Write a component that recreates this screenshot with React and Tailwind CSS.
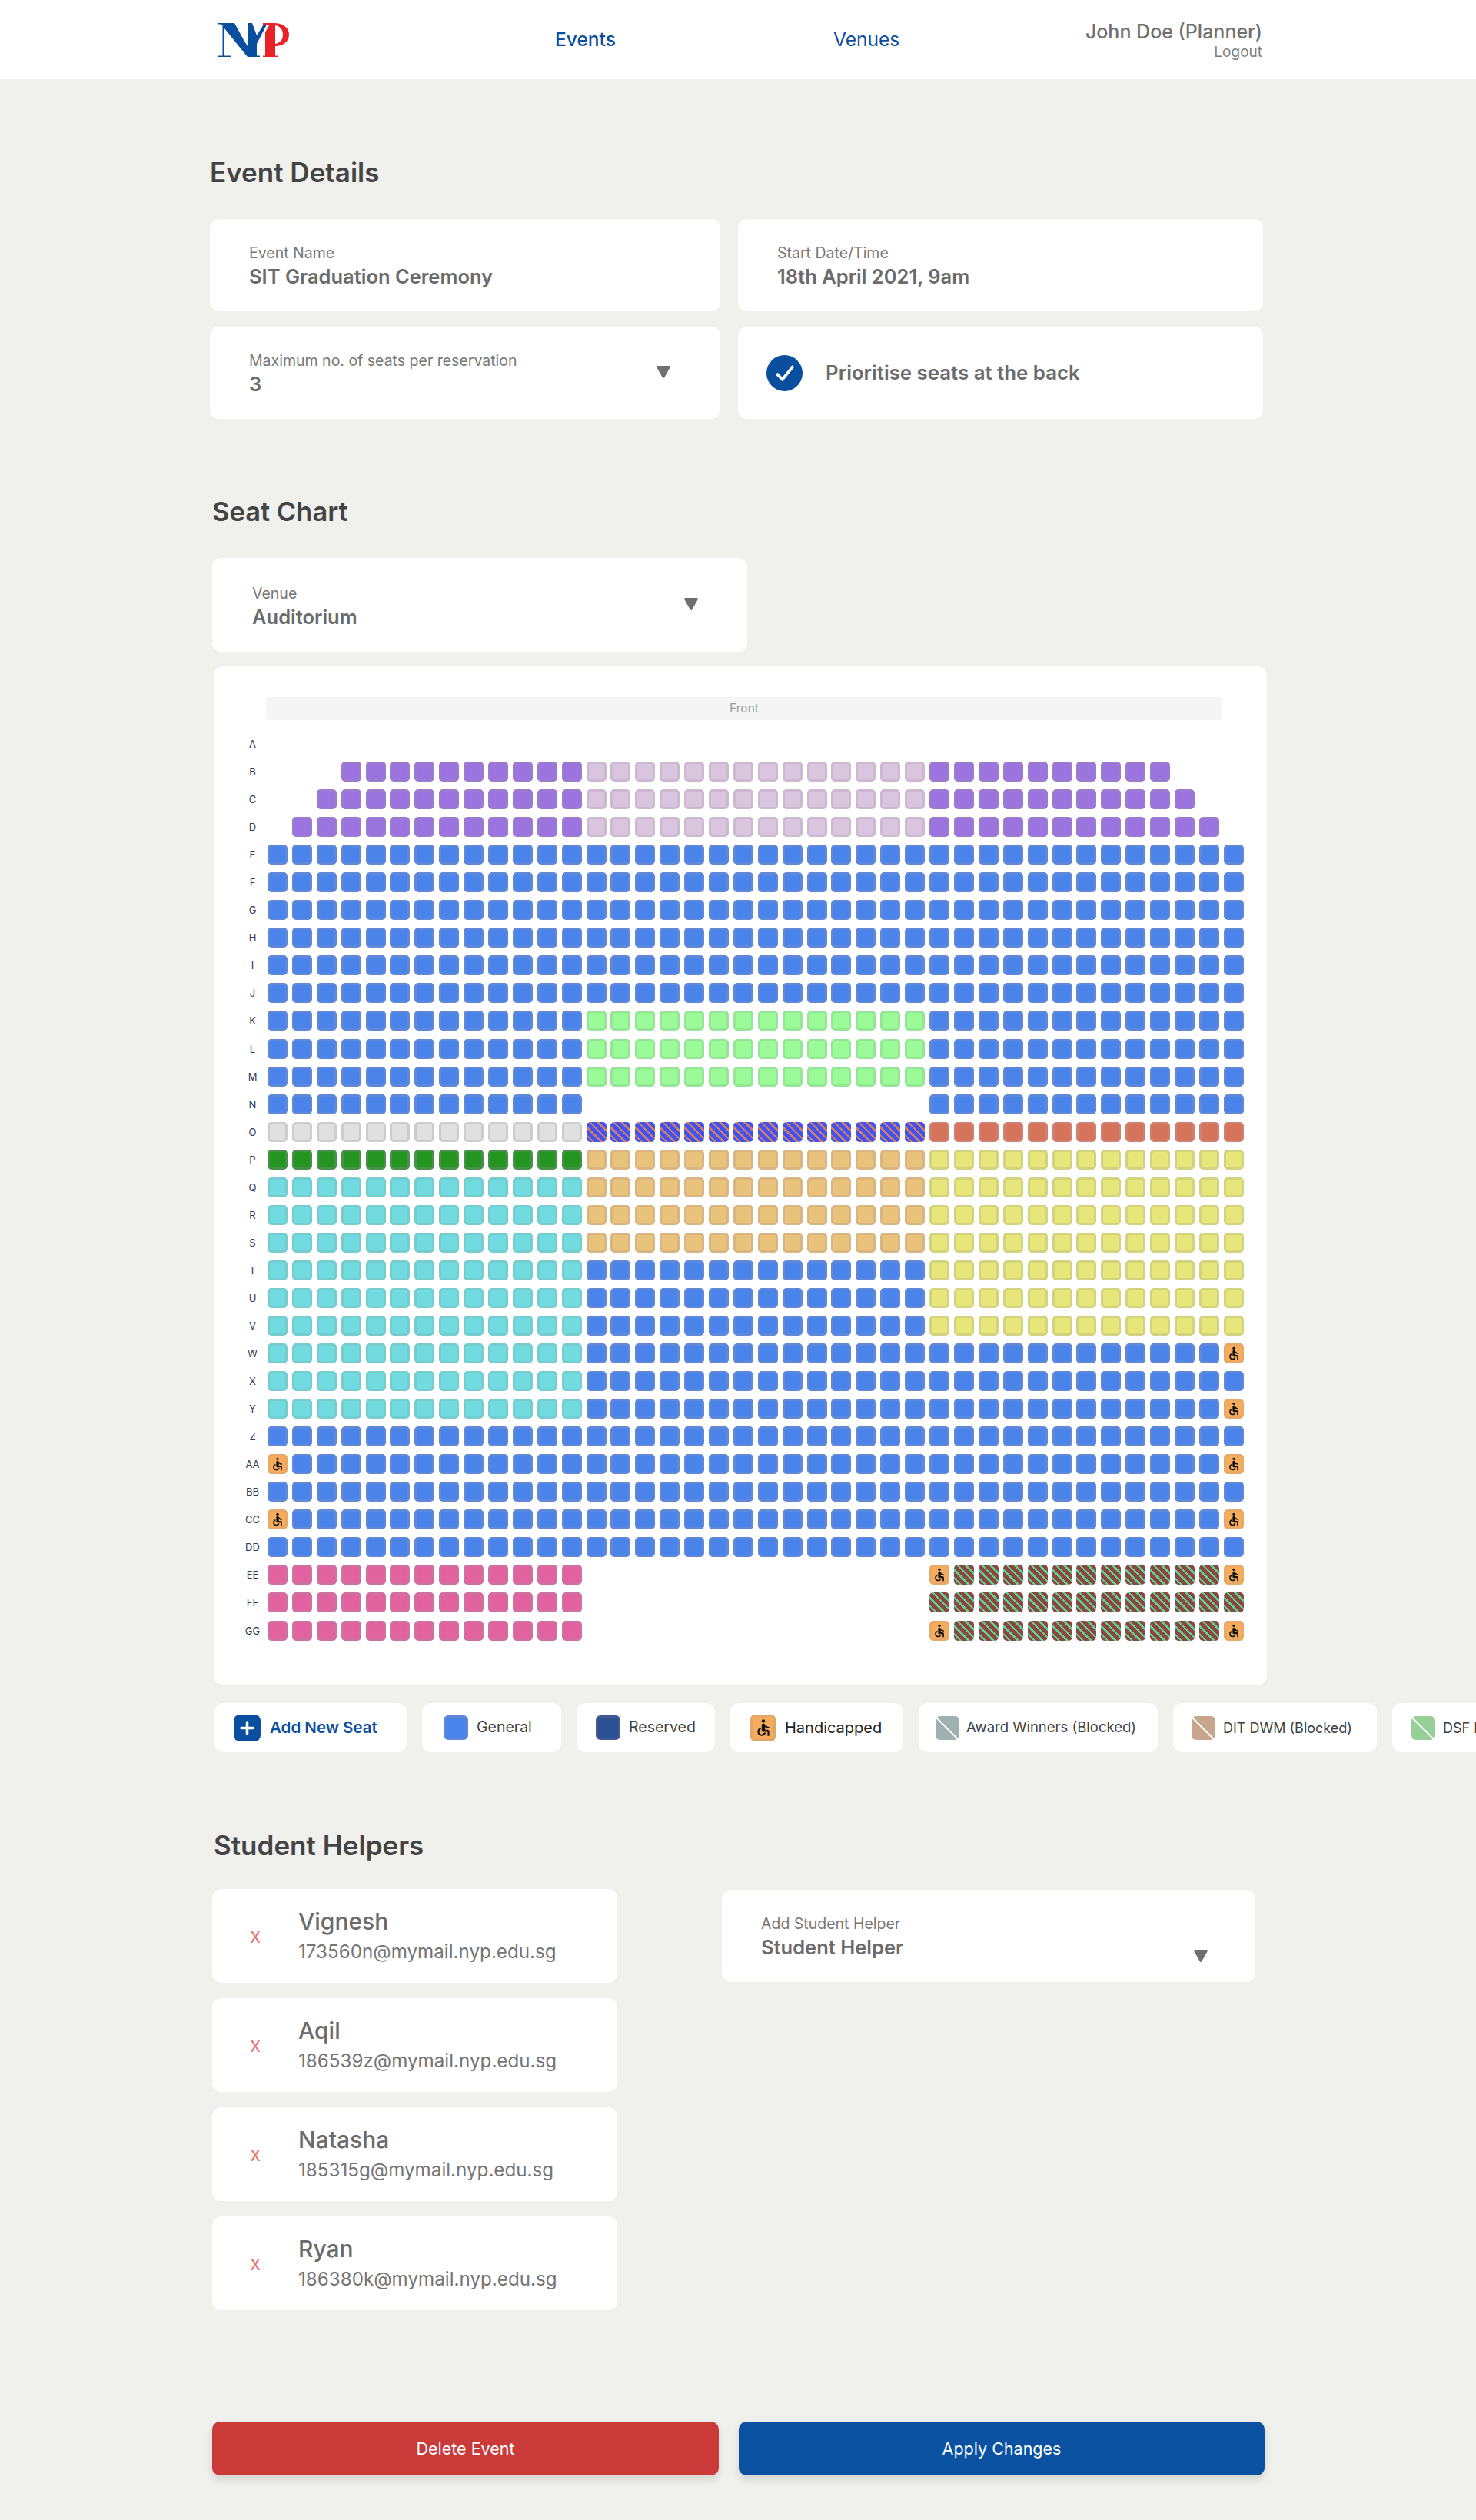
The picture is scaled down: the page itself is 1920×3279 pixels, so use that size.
import React from 'react';
import { MdAccessible } from 'react-icons/md';

const seatStyles = {
  general: 'bg-[#4a83ea] border-[#6088d8]',
  purple: 'bg-[#9b74e0] border-[#9a7bcf]',
  lilac: 'bg-[#d9c5de] border-[#ccb8d0]',
  green: 'bg-[#9bfb98] border-[#94e596]',
  grey: 'bg-[#e0e0e0] border-[#cccccc]',
  salmon: 'bg-[#d5745a] border-[#d08070]',
  forest: 'bg-[#239520] border-[#48914a]',
  tan: 'bg-[#e9c37b] border-[#d8b581]',
  yellow: 'bg-[#e6e67a] border-[#d3d27e]',
  teal: 'bg-[#72dbdf] border-[#76cdd0]',
  pink: 'bg-[#e262a0] border-[#d070a0]',
  handicapped: 'bg-[#f6ac5c] border-[#e8a868]',
  stripeBlue: 'bg-[repeating-linear-gradient(45deg,#3f52f2_0px,#3f52f2_5px,#d27c68_5px,#d27c68_7.5px)] border-transparent [background-origin:border-box]',
  stripeRed: 'bg-[repeating-linear-gradient(45deg,#8f4444_0px,#8f4444_5px,#5cd28c_5px,#5cd28c_7.5px)] border-transparent [background-origin:border-box]',
};

// [first column, last column, seat type], columns run 0-39
const rows = [
  ['A', []],
  ['B', [[3, 12, 'purple'], [13, 26, 'lilac'], [27, 36, 'purple']]],
  ['C', [[2, 12, 'purple'], [13, 26, 'lilac'], [27, 37, 'purple']]],
  ['D', [[1, 12, 'purple'], [13, 26, 'lilac'], [27, 38, 'purple']]],
  ['E', [[0, 39, 'general']]],
  ['F', [[0, 39, 'general']]],
  ['G', [[0, 39, 'general']]],
  ['H', [[0, 39, 'general']]],
  ['I', [[0, 39, 'general']]],
  ['J', [[0, 39, 'general']]],
  ['K', [[0, 12, 'general'], [13, 26, 'green'], [27, 39, 'general']]],
  ['L', [[0, 12, 'general'], [13, 26, 'green'], [27, 39, 'general']]],
  ['M', [[0, 12, 'general'], [13, 26, 'green'], [27, 39, 'general']]],
  ['N', [[0, 12, 'general'], [27, 39, 'general']]],
  ['O', [[0, 12, 'grey'], [13, 26, 'stripeBlue'], [27, 39, 'salmon']]],
  ['P', [[0, 12, 'forest'], [13, 26, 'tan'], [27, 39, 'yellow']]],
  ['Q', [[0, 12, 'teal'], [13, 26, 'tan'], [27, 39, 'yellow']]],
  ['R', [[0, 12, 'teal'], [13, 26, 'tan'], [27, 39, 'yellow']]],
  ['S', [[0, 12, 'teal'], [13, 26, 'tan'], [27, 39, 'yellow']]],
  ['T', [[0, 12, 'teal'], [13, 26, 'general'], [27, 39, 'yellow']]],
  ['U', [[0, 12, 'teal'], [13, 26, 'general'], [27, 39, 'yellow']]],
  ['V', [[0, 12, 'teal'], [13, 26, 'general'], [27, 39, 'yellow']]],
  ['W', [[0, 12, 'teal'], [13, 38, 'general'], [39, 39, 'handicapped']]],
  ['X', [[0, 12, 'teal'], [13, 39, 'general']]],
  ['Y', [[0, 12, 'teal'], [13, 38, 'general'], [39, 39, 'handicapped']]],
  ['Z', [[0, 39, 'general']]],
  ['AA', [[0, 0, 'handicapped'], [1, 38, 'general'], [39, 39, 'handicapped']]],
  ['BB', [[0, 39, 'general']]],
  ['CC', [[0, 0, 'handicapped'], [1, 38, 'general'], [39, 39, 'handicapped']]],
  ['DD', [[0, 39, 'general']]],
  ['EE', [[0, 12, 'pink'], [27, 27, 'handicapped'], [28, 38, 'stripeRed'], [39, 39, 'handicapped']]],
  ['FF', [[0, 12, 'pink'], [27, 39, 'stripeRed']]],
  ['GG', [[0, 12, 'pink'], [27, 27, 'handicapped'], [28, 38, 'stripeRed'], [39, 39, 'handicapped']]],
];

const columns = Array.from({ length: 40 }, (_, i) => i);

const helpers = [
  { name: 'Vignesh', email: '173560n@mymail.nyp.edu.sg' },
  { name: 'Aqil', email: '186539z@mymail.nyp.edu.sg' },
  { name: 'Natasha', email: '185315g@mymail.nyp.edu.sg' },
  { name: 'Ryan', email: '186380k@mymail.nyp.edu.sg' },
];

const Logo = () => (
  <svg width="92" height="44" viewBox="0 0 92 44">
    <path fill="#0a4ea0" d="M0 0H21L33 22L38 30V0H44L50 16L60 0H64L50 27V42.500H54V44H38L8 7V42.500H16V44H0V42.500H5.500V3L3 1.500H0Z" />
    <path fill="#ea2228" d="M58 0H72C84 0 92 6 92 15C92 24 84 30 74 30V42.500H78V44H58V42.500H61V12L66 3H58ZM74 3V27C80 26 84 22 84 15C84 8 80 4 74 3Z" />
  </svg>
);

const Arrow = ({ className }) => (
  <svg className={className} width="18" height="16" viewBox="0 0 18 16">
    <path fill="#6f6f6f" d="M1.500 0H16.500C17.600 0 18.200 1 17.700 2L10.200 15.200C9.600 16.200 8.400 16.200 7.800 15.200L0.300 2C-0.200 1 0.400 0 1.500 0Z" />
  </svg>
);

const InfoCard = ({ label, value, children, className = '' }) => (
  <div className={`relative bg-white rounded-[12px] flex flex-col ${className}`}>
    <div className="text-[19.5px] leading-[24px] text-[#777777] whitespace-nowrap">{label}</div>
    <div className="text-[25.5px] leading-[32px] mt-[3px] font-semibold text-[#6b6b6b] whitespace-nowrap">{value}</div>
    {children}
  </div>
);

const Seat = ({ type }) => {
  if (!type) return <div className="w-[26px] h-[26px] shrink-0" />;
  return (
    <div className={`w-[26px] h-[26px] shrink-0 rounded-[5px] border-[3px] flex items-center justify-center ${seatStyles[type]}`}>
      {type === 'handicapped' && <MdAccessible className="shrink-0 text-[#111111] text-[20px]" />}
    </div>
  );
};

const SeatRow = ({ label, spans }) => (
  <div className="flex items-center h-[26px]">
    <div className="w-[39px] ml-[31px] shrink-0 text-center text-[13px] leading-[26px] text-[#2d3b5c]">{label}</div>
    <div className="flex gap-x-[5.9px]">
      {columns.map((col) => {
        const span = spans.find(([from, to]) => col >= from && col <= to);
        return <Seat key={col} type={span ? span[2] : null} />;
      })}
    </div>
  </div>
);

const LegendCard = ({ width, children }) => (
  <div className={`bg-white rounded-[12px] h-[64px] shrink-0 flex items-center ${width}`}>{children}</div>
);

const BlockedSwatch = ({ color }) => (
  <div className="flex items-center shrink-0 border-l border-[#e4e4e4] h-[38px] pl-[4px]">
    <svg width="31" height="31" viewBox="0 0 31 31">
      <rect width="31" height="31" rx="6" fill={color} />
      <path d="M1 2L29 30" stroke="#ffffff" strokeWidth="2" />
    </svg>
  </div>
);

const App = () => {
  return (
    <div className="w-full min-h-[3279px] bg-[#f0f1ec] overflow-hidden flex flex-col font-['Inter',sans-serif]">
      {/* Nav */}
      <div className="h-[103px] bg-white shrink-0 flex items-center pl-[284px]">
        <Logo />
        <div className="ml-[346px] text-[24.5px] font-medium text-[#0a4ea0] w-[362px]">Events</div>
        <div className="text-[24.5px] text-[#0a4ea0] w-[327px]">Venues</div>
        <div className="w-[231px] flex flex-col items-end mt-[2px]">
          <div className="text-[25px] leading-[28px] font-medium text-[#707070] whitespace-nowrap">John Doe (Planner)</div>
          <div className="text-[19px] leading-[22px] mt-[2px] text-[#808080]">Logout</div>
        </div>
      </div>

      {/* Event details */}
      <h2 className="ml-[273px] mt-[101px] text-[35px] leading-[40px] font-semibold text-[#444444]">Event Details</h2>
      <div className="ml-[273px] mt-[41px] grid grid-cols-[664px_683px] gap-x-[23px] gap-y-[20px]">
        <InfoCard className="h-[120px] pl-[51px] pt-[32px]" label="Event Name" value="SIT Graduation Ceremony" />
        <InfoCard className="h-[120px] pl-[51px] pt-[32px]" label="Start Date/Time" value="18th April 2021, 9am" />
        <InfoCard className="h-[120px] pl-[51px] pt-[32px]" label="Maximum no. of seats per reservation" value="3">
          <Arrow className="absolute right-[65px] top-[51px]" />
        </InfoCard>
        <div className="h-[120px] bg-white rounded-[12px] flex items-center pl-[37px]">
          <div className="w-[47px] h-[47px] rounded-full bg-[#0a4ea0] flex items-center justify-center">
            <svg width="28" height="24" viewBox="0 0 26 22">
              <path d="M3 12L10 19L23 3" fill="none" stroke="#ffffff" strokeWidth="3.500" />
            </svg>
          </div>
          <div className="ml-[30px] text-[25.8px] font-semibold text-[#6b6b6b]">Prioritise seats at the back</div>
        </div>
      </div>

      {/* Seat chart */}
      <h2 className="ml-[276px] mt-[101px] text-[34.5px] leading-[40px] font-semibold text-[#444444]">Seat Chart</h2>
      <InfoCard className="ml-[276px] mt-[40px] w-[696px] h-[122px] pl-[52px] pt-[34px]" label="Venue" value="Auditorium">
        <Arrow className="absolute right-[64px] top-[52px]" />
      </InfoCard>

      <div className="ml-[278px] mt-[19px] w-[1370px] h-[1325px] bg-white rounded-[12px] pt-[40px]">
        <div className="ml-[68px] w-[1244px] h-[30px] bg-[#f5f5f5] rounded-[4px] flex items-center justify-center text-[15.5px] text-[#9a9a9a]">Front</div>
        <div className="mt-[18px] flex flex-col gap-y-[10.06px]">
          {rows.map(([label, spans]) => (
            <SeatRow key={label} label={label} spans={spans} />
          ))}
        </div>
      </div>

      {/* Legend */}
      <div className="ml-[279px] mt-[24px] flex gap-x-[20px] text-[19.5px] text-[#3c4043]">
        <LegendCard width="w-[250px] pl-[25px]">
          <div className="w-[35px] h-[35px] rounded-[8px] bg-[#0a4ea0] flex items-center justify-center">
            <svg width="19" height="19" viewBox="0 0 19 19">
              <path d="M9.500 2V17M2 9.500H17" stroke="#ffffff" strokeWidth="3.500" strokeLinecap="round" />
            </svg>
          </div>
          <div className="ml-[12px] text-[20.5px] font-semibold text-[#0a4ea0] whitespace-nowrap">Add New Seat</div>
        </LegendCard>
        <LegendCard width="w-[181px] pl-[28px]">
          <div className="w-[32px] h-[32px] rounded-[6px] bg-[#4a83ea] border-[3px] border-[#6088d8]" />
          <div className="ml-[11px]">General</div>
        </LegendCard>
        <LegendCard width="w-[180px] pl-[25px]">
          <div className="w-[32px] h-[32px] rounded-[6px] bg-[#2c5091] border-[3px] border-[#3c5a94]" />
          <div className="ml-[11px]">Reserved</div>
        </LegendCard>
        <LegendCard width="w-[225px] pl-[26px]">
          <div className="w-[33px] h-[35px] rounded-[6px] bg-[#f6ac5c] border-[3px] border-[#e0a868] flex items-center justify-center">
            <MdAccessible className="text-[#111111] text-[26px] shrink-0" />
          </div>
          <div className="ml-[12px] text-[20px] text-[#222222]">Handicapped</div>
        </LegendCard>
        <LegendCard width="w-[311px] pl-[17px]">
          <BlockedSwatch color="#9fb0b0" />
          <div className="ml-[9px] text-[18.5px] mb-[1px] whitespace-nowrap">Award Winners (Blocked)</div>
        </LegendCard>
        <LegendCard width="w-[265px] pl-[19px]">
          <BlockedSwatch color="#c8a68e" />
          <div className="ml-[10px] text-[18px] whitespace-nowrap">DIT DWM (Blocked)</div>
        </LegendCard>
        <LegendCard width="w-[265px] pl-[20px]">
          <BlockedSwatch color="#96d096" />
          <div className="ml-[10px] text-[18px] whitespace-nowrap">DSF Blocked</div>
        </LegendCard>
      </div>

      {/* Student helpers */}
      <h2 className="ml-[278px] mt-[101px] text-[35px] leading-[40px] font-semibold text-[#444444]">Student Helpers</h2>
      <div className="ml-[276px] mt-[37px] flex items-start">
        <div className="w-[527px] flex flex-col gap-y-[20px]">
          {helpers.map((helper) => (
            <div key={helper.name} className="h-[122px] bg-white rounded-[12px] flex items-center">
              <div className="w-[112px] pl-[49px] pb-[2px] text-[26px] text-[#e87878]">x</div>
              <div className="flex flex-col">
                <div className="text-[30px] leading-[36px] font-medium text-[#6b6b6b]">{helper.name}</div>
                <div className="text-[24.2px] leading-[32px] mt-[6px] text-[#757575]">{helper.email}</div>
              </div>
            </div>
          ))}
        </div>
        <div className="ml-[68px] w-[1px] h-[542px] bg-[#8a8a8a]" />
        <InfoCard className="ml-[67px] mt-[1px] w-[694px] h-[120px] pl-[51px] pt-[32px]" label="Add Student Helper" value="Student Helper">
          <Arrow className="absolute right-[62px] top-[78px]" />
        </InfoCard>
      </div>

      {/* Actions */}
      <div className="ml-[276px] mt-[145px] flex gap-x-[26px]">
        <button className="w-[659px] h-[70px] rounded-[10px] bg-[#c93a39] text-white text-[21.5px] shadow-[0_6px_12px_rgba(0,0,0,0.12)]">Delete Event</button>
        <button className="w-[684px] h-[70px] rounded-[10px] bg-[#0a52a1] text-white text-[21.5px] shadow-[0_6px_12px_rgba(0,0,0,0.12)]">Apply Changes</button>
      </div>
    </div>
  );
};

export default App;
